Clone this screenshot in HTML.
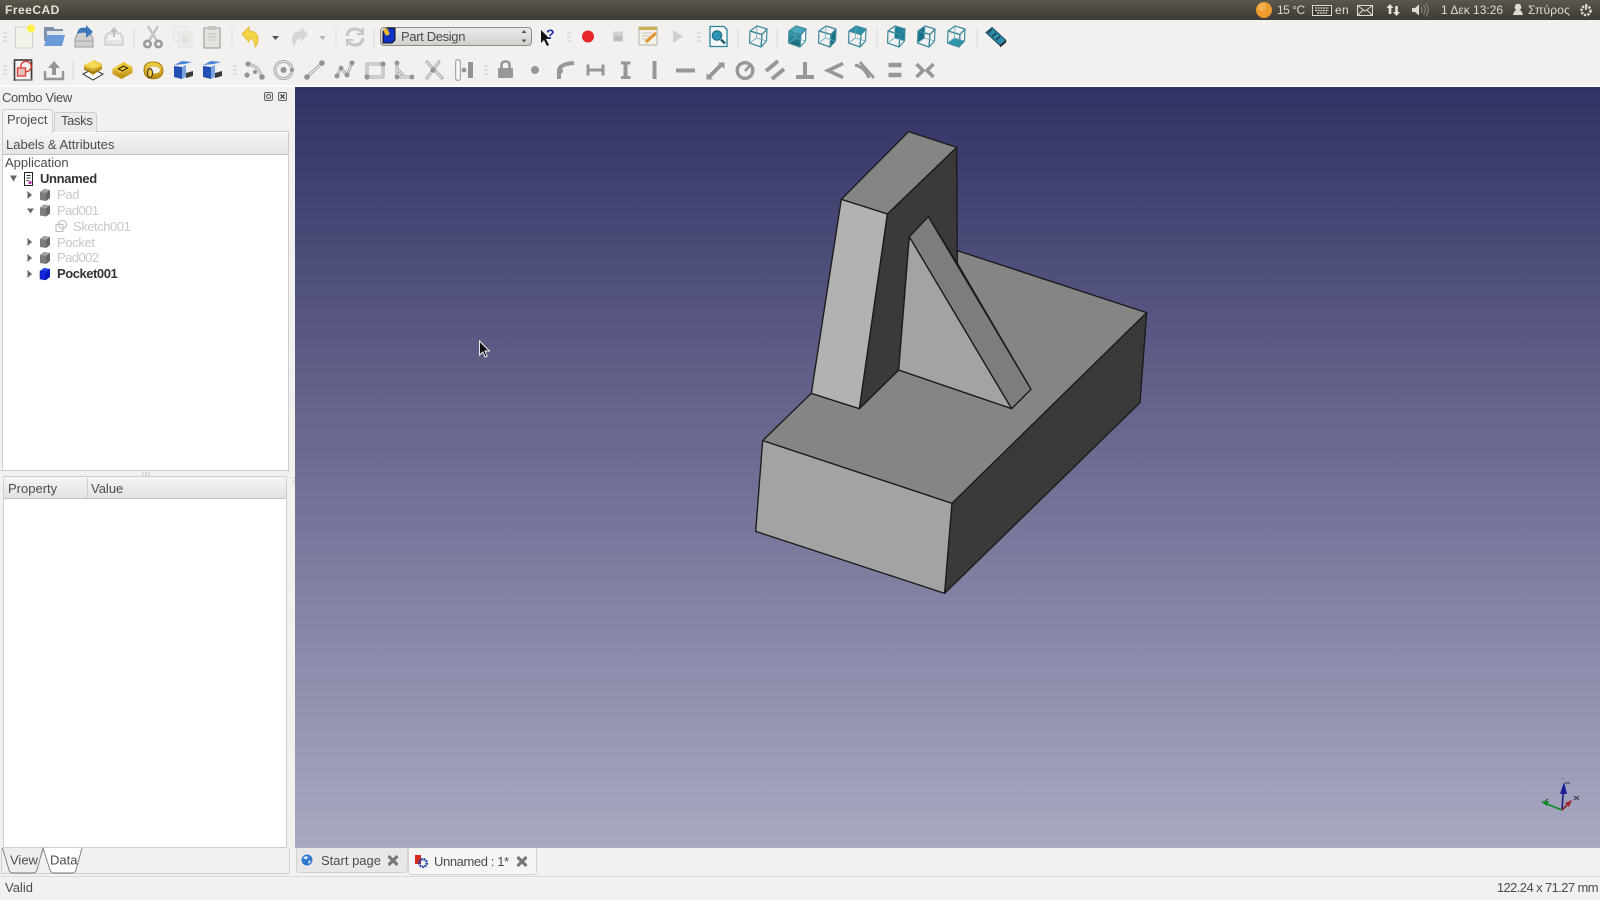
<!DOCTYPE html>
<html>
<head>
<meta charset="utf-8">
<title>FreeCAD</title>
<style>
html,body{margin:0;padding:0;width:1600px;height:900px;overflow:hidden;background:#f2f1f0}
body{position:relative;font-family:"Liberation Sans","DejaVu Sans",sans-serif;font-size:13px;color:#4c4c4c}
.t{position:absolute;white-space:nowrap;line-height:16px;height:16px}
.n{letter-spacing:-.35px}
.b{position:absolute;box-sizing:border-box}
.dis{color:#c8c7c5}
svg{position:absolute;left:0;top:0}
</style>
</head>
<body>
<!-- top bar -->
<div class="b" style="left:0;top:0;width:1600px;height:20px;background:linear-gradient(#5a574c,#3c3b36)"></div>
<div class="t" style="left:5px;top:2px;color:#e6e2d8;font-weight:bold;font-size:12px;letter-spacing:.5px">FreeCAD</div>
<div class="t" style="left:1277px;top:2px;color:#dfdbd2;font-size:12px;letter-spacing:-.5px">15 °C</div>
<div class="t" style="left:1335px;top:2px;color:#dfdbd2;font-size:12px;letter-spacing:.3px">en</div>
<div class="t" style="left:1441px;top:2px;color:#dfdbd2;font-size:12px">1 Δεκ 13:26</div>
<div class="t" style="left:1528px;top:2px;color:#dfdbd2;font-size:12px;letter-spacing:.2px">Σπύρος</div>

<!-- toolbar base line -->
<div class="b" style="left:0;top:85px;width:1600px;height:2px;background:#fbfbfa"></div>

<!-- 3D viewport -->
<div class="b" style="left:295px;top:87px;width:1305px;height:761px;background:linear-gradient(#323264,#a9a9c3)"></div>

<!-- combo box -->
<div class="b" style="left:380px;top:27px;width:152px;height:19px;border:1px solid #8f8d88;border-radius:4px;background:linear-gradient(#ecebe9,#d2d0cd)"></div>
<div class="t n" style="left:401px;top:28.500px">Part Design</div>

<!-- left dock -->
<div class="t n" style="left:2px;top:89.500px">Combo View</div>
<div class="b" style="left:2px;top:131px;width:287px;height:340px;border:1px solid #cfcdca;border-radius:2px;background:#fff"></div>
<div class="b" style="left:2px;top:109px;width:51px;height:24px;background:#f5f4f3;border:1px solid #cfcdca;border-bottom:none;border-radius:3px 3px 0 0"></div>
<div class="b" style="left:54px;top:112px;width:43px;height:20px;background:#eceae8;border:1px solid #cfcdca;border-bottom:none;border-radius:3px 3px 0 0"></div>
<div class="t" style="left:7px;top:112px">Project</div>
<div class="t n" style="left:61px;top:113px">Tasks</div>
<div class="b" style="left:3px;top:133px;width:285px;height:22px;background:linear-gradient(#f6f5f4,#e6e4e2);border-bottom:1px solid #c4c2bf"></div>
<div class="t" style="left:6px;top:137px">Labels &amp; Attributes</div>
<div class="t" style="left:5px;top:155px">Application</div>
<div class="t n" style="left:40px;top:171px;font-weight:bold;color:#333">Unnamed</div>
<div class="t dis n" style="left:57px;top:187px">Pad</div>
<div class="t dis n" style="left:57px;top:202.500px;letter-spacing:-.55px">Pad001</div>
<div class="t dis n" style="left:73px;top:218.500px;letter-spacing:-.45px">Sketch001</div>
<div class="t dis n" style="left:57px;top:234.500px">Pocket</div>
<div class="t dis n" style="left:57px;top:250px;letter-spacing:-.55px">Pad002</div>
<div class="t n" style="left:57px;top:266px;font-weight:bold;color:#333;letter-spacing:-.45px">Pocket001</div>

<div class="b" style="left:0;top:470px;width:290px;height:6px;background:#f2f1f0;border-top:1px solid #cfcdca"></div>
<div class="b" style="left:3px;top:476px;width:284px;height:372px;border:1px solid #cfcdca;background:#fff"></div>
<div class="b" style="left:4px;top:477px;width:282px;height:22px;background:linear-gradient(#f6f5f4,#e4e2e0);border-bottom:1px solid #c4c2bf"></div>
<div class="b" style="left:87px;top:478px;width:1px;height:20px;background:#cfcdca"></div>
<div class="t" style="left:8px;top:481px">Property</div>
<div class="t" style="left:91px;top:481px">Value</div>

<!-- bottom left frame -->
<div class="b" style="left:1px;top:848px;width:289px;height:26px;border:1px solid #cfcdca;border-top:none;border-radius:0 0 2px 2px"></div>

<!-- mdi tabs -->
<div class="b" style="left:296px;top:848px;width:112px;height:25px;background:#e9e8e6;border:1px solid #d4d2cf;border-top:none;border-radius:0 0 3px 3px"></div>
<div class="b" style="left:408px;top:848px;width:129px;height:27px;background:#f6f5f4;border:1px solid #d4d2cf;border-top:none;border-radius:0 0 3px 3px"></div>
<div class="t" style="left:321px;top:852.500px">Start page</div>
<div class="t" style="left:434px;top:853.500px;letter-spacing:-.4px">Unnamed : 1*</div>

<!-- status bar -->
<div class="b" style="left:0;top:876px;width:1600px;height:24px;background:#f2f1f0;border-top:1px solid #dcdad7"></div>
<div class="t" style="left:5px;top:879.500px">Valid</div>
<div class="t" style="right:2px;top:880px;letter-spacing:-.6px">122.24 x 71.27 mm</div>

<svg width="1600" height="900" viewBox="0 0 1600 900" xmlns="http://www.w3.org/2000/svg">
<defs>
  <linearGradient id="tealA" x1="0" y1="0" x2="0" y2="1"><stop offset="0" stop-color="#3a9fb5"/><stop offset="1" stop-color="#14606f"/></linearGradient>
  <linearGradient id="yel" x1="0" y1="0" x2="0" y2="1"><stop offset="0" stop-color="#f2d34a"/><stop offset="1" stop-color="#b98a10"/></linearGradient>
  <g id="cube" fill="none" stroke="#3c8a9c" stroke-width="1.200" stroke-linejoin="round">
    <path d="M-8-5.500-1-10.500 9-7.500 4-2Z"/>
    <path d="M-8-5.500 4-2 3 10.500-8.500 6.500Z"/>
    <path d="M4-2 9-7.500 8.500 4.500 3 10.500Z"/>
    <path d="M-1-10.500-1.500 1.500M-1.500 1.500-8.500 6.500M-1.500 1.500 8.500 4.500" stroke-width=".8" stroke="#6aa9b8"/>
  </g>
  <g id="x"><path d="M-3.500-3.500 3.500 3.500M3.500-3.500-3.500 3.500" stroke="#777" stroke-width="3.200" stroke-linecap="round"/></g>
  <g id="grip"><path d="M-2-4H2M-2 0H2M-2 4H2" stroke="#d3d1ce" stroke-width="1.200"/></g>
  <g id="gcube"><path d="M-5-3-1-6 5-5 5 3 1 6-5 5Z" fill="#7d7d7d"/><path d="M-1-6 5-5 1-2-5-3Z" fill="#a0a0a0"/><path d="M1-2 5-5 5 3 1 6Z" fill="#666"/></g>
</defs>

<!-- tray icons -->
<circle cx="1264" cy="10" r="8" fill="#ee9a2e"/>
<circle cx="1262" cy="7" r="4" fill="#f7be6a" opacity=".6"/>
<rect x="1312.500" y="5.500" width="19" height="10" fill="#3c3b36" stroke="#dfdbd2"/>
<path d="M1315 8h14M1315 10.500h14M1317 13h10" stroke="#dfdbd2" stroke-width="1.300" stroke-dasharray="2 .7"/>
<rect x="1357.500" y="5.500" width="15" height="10" fill="#4a4942" stroke="#dfdbd2"/>
<path d="M1358 6l7 5 7-5M1358 15l5-5M1372 15l-5-5" fill="none" stroke="#dfdbd2"/>
<path d="M1390 4l-3.500 4h2.200v6h2.600v-6h2.200zM1396.500 16l3.500-4h-2.200v-6h-2.600v6h-2.200z" fill="#e8e5dc"/>
<path d="M1412 8h3l4-3.500v11l-4-3.500h-3z" fill="#dfdbd2"/>
<path d="M1421 7q2 3 0 6M1423.500 5q3.500 5 0 10M1426 3.500q4.500 6.500 0 13" fill="none" stroke="#8d8a81" stroke-width="1"/>
<circle cx="1518" cy="7" r="3.300" fill="#dfdbd2"/><path d="M1513 15q1-4.500 3.500-5h3q2.500.5 3.500 5z" fill="#dfdbd2"/>
<circle cx="1586" cy="10.500" r="4.500" fill="none" stroke="#dfdbd2" stroke-width="2.500" stroke-dasharray="2.200 1.200"/>
<path d="M1586 4v6" stroke="#dfdbd2" stroke-width="1.800"/>

<!-- grips & separators -->
<use href="#grip" x="5" y="37"/><use href="#grip" x="5" y="70"/><use href="#grip" x="235" y="70"/><use href="#grip" x="486" y="70"/><use href="#grip" x="569" y="37"/><use href="#grip" x="699" y="37"/>
<path d="M134 28v19M232 28v19M336 28v19M374 28v19M738 28v19M777 28v19M877 28v19M977 28v19M73 60v20" stroke="#dcdad7"/>

<!-- ROW 1 -->
<g transform="translate(23.500,37)"><rect x="-8" y="-10" width="17" height="21" fill="#f3f2ea" stroke="#d2d0c9"/><circle cx="7.500" cy="-8.500" r="4" fill="#fff04a"/></g>
<g transform="translate(54,37)"><path d="M-10-10h9l2 2h8v12h-19z" fill="#7d92a8"/><path d="M-7-6H9v8h-16z" fill="#e4e6e8"/><path d="M-7-2H11L8 9H-10Z" fill="#6b9ad8"/></g>
<g transform="translate(84,37)"><path d="M-9 2-5-7H5L9 2V10H-9Z" fill="#cfcfcf" stroke="#9c9c9c"/><path d="M-9 4H9" stroke="#a8a8a8"/><path d="M-7-3Q-6-11 2-9L2-12 9-5 2 1 2-4Q-3-5-7-3Z" fill="#3e78b8"/></g>
<g transform="translate(114,37)" opacity=".6"><path d="M-9 0-6-4H6L9 0V8H-9Z" fill="#dcdcda" stroke="#a2a2a0"/><path d="M-6-2H6V3H-6Z" fill="#f5f5f3"/><path d="M0-10-4-5H-1V0H1V-5H4Z" fill="#9c9c9a"/></g>
<g transform="translate(153,37)" fill="none" stroke="#a5a5a5" stroke-width="2.600"><path d="M-5-11 4 4M5-11-4 4" stroke="#c4c4c2"/><circle cx="-5.500" cy="7" r="3.200" stroke="#9a9a9a"/><circle cx="5.500" cy="7" r="3.200" stroke="#9a9a9a"/></g>
<g transform="translate(183,37)"><rect x="-9" y="-10" width="12" height="14" fill="#f2f1ef" stroke="#e2e1de"/><rect x="-4" y="-5" width="13" height="15" fill="#eeedeb" stroke="#e2e1de"/><rect x="-1" y="-2" width="7" height="8" fill="#e2e1de"/></g>
<g transform="translate(212,37)"><rect x="-8" y="-9" width="16" height="20" fill="#e4e3e0" stroke="#b0afac" stroke-width="1.500"/><rect x="-4" y="-11" width="8" height="4" fill="#c6c5c2"/><path d="M-4-3h8M-4 0h8M-4 3h6" stroke="#bdbcb9"/></g>
<g transform="translate(251,37)"><path d="M-9-3-2-10V-6Q7-6 7 3 7 7 4 10 4 2-2 1V5Z" fill="#f5d445" stroke="#e2bd35"/></g>
<path d="M272 36h7l-3.500 4z" fill="#555"/>
<g transform="translate(299,37)"><path d="M9-3 2-10V-6Q-7-6-7 3-7 7-4 10-4 2 2 1V5Z" fill="#d6d6d4"/></g>
<path d="M319 36h7l-3.500 4z" fill="#b8b8b6"/>
<g transform="translate(355,37)" fill="none" stroke="#c6c6c4" stroke-width="3"><path d="M-8-1Q-7-8 0-8 4-8 7-5"/><path d="M8 1Q7 8 0 8-4 8-7 5"/><path d="M8-9V-3H2M-8 9V3H-2" stroke-width="2"/></g>
<!-- combo icon and arrows -->
<g transform="translate(389,36)"><path d="M-6-5-2-8H6V4L3 7H-6Z" fill="#0f31c8" stroke="#111"/><path d="M-6-6-2-8 1-2-3 0Z" fill="#e7b928"/></g>
<path d="M521.500 33l2.500-3 2.500 3zM521.500 39.500l2.500 3 2.500-3z" fill="#555"/>
<!-- what's this -->
<g transform="translate(547,37)"><path d="M-6-7V6L-3 3 0 9 2 8-1 2H3Z" fill="#111"/><text x="-1" y="2" font-family="Liberation Sans,sans-serif" font-size="14" font-weight="bold" fill="#1c2fa5">?</text></g>
<circle cx="588" cy="36.500" r="6" fill="#e8262c"/>
<rect x="613" y="31.500" width="10" height="10" fill="#d2d1cf"/><rect x="614" y="36" width="8" height="5" fill="#bcbbb9"/>
<g transform="translate(648,36)"><rect x="-9" y="-9" width="18" height="18" rx="1" fill="#f2f1ea" stroke="#b5b4ac"/><rect x="-9" y="-9" width="18" height="3" fill="#c9b04a"/><path d="M-6-3H4M-6 0H2M-6 3H0" stroke="#c6c5be"/><path d="M-2 6 8-3" stroke="#e2902a" stroke-width="3"/></g>
<path d="M673 30v13l10-6.500z" fill="#d0cfcd"/>
<g transform="translate(718,36.500)"><path d="M-8-10H6L9-7V10H-8Z" fill="#f8f8f6" stroke="#2a8398" stroke-width="1.300"/><circle cx="-1" cy="-1" r="4.800" fill="#2d94b4" stroke="#1a6a80"/><path d="M3 3 7 7" stroke="#1a5a70" stroke-width="2.400"/></g>
<use href="#cube" x="758" y="36.500"/>
<g transform="translate(797,36.500)"><path d="M-8-5.500-1-10.500 9-7.500 4-2Z" fill="#48a9bf"/><path d="M-8-5.500 4-2 3 10.500-8.500 6.500Z" fill="url(#tealA)"/><path d="M4-2 9-7.500 8.500 4.500 3 10.500Z" fill="#fff"/><use href="#cube"/></g>
<g transform="translate(827,36.500)"><path d="M4-2 9-7.500 8.500 4.500 3 10.500Z" fill="#1a7287"/><use href="#cube"/></g>
<g transform="translate(857,36.500)"><path d="M-8-5.500-1-10.500 9-7.500 4-2Z" fill="#2e8fa8"/><use href="#cube"/></g>
<g transform="translate(896,36.500)"><path d="M-1-10.500 9-7.500 8.500 4.500-1.500 1.500Z" fill="#1f7f96"/><use href="#cube"/></g>
<g transform="translate(926,36.500)"><path d="M-8-5.500-1-10.500-1.500 1.500-8.500 6.500Z" fill="#17708a"/><use href="#cube"/></g>
<g transform="translate(956,36.500)"><path d="M-8.500 6.500-1.500 1.500 8.500 4.500 3 10.500Z" fill="#2e97b0"/><use href="#cube"/></g>
<g transform="translate(996,36.500)"><path d="M-10-4-4-9 10 4 4 9Z" fill="#2e8aa6" stroke="#15485a"/><path d="M-8-3.500-4-7M-4 0 0-3.500M0 3.500 4 0" stroke="#123" stroke-width="1"/><path d="M4 9 10 4 10 6 4 11Z" fill="#222"/></g>

<!-- ROW 2 -->
<g transform="translate(23.500,70)"><rect x="-9" y="-10" width="17" height="20" fill="#f4f3f1" stroke="#3c3c3c" stroke-width="1.600"/><path d="M-8 10H9V-9" stroke="#aaa" fill="none"/><circle cx="2.500" cy="-3.500" r="5.200" fill="none" stroke="#e03a32" stroke-width="1.300"/><rect x="-6" y="-2" width="8" height="8" fill="#eac2bc" stroke="#e03a32" stroke-width="1.300"/></g>
<g transform="translate(54,70)"><path d="M-9 1V9H9V1" fill="none" stroke="#959595" stroke-width="2.400"/><path d="M0-9-6-2H-2V5H2V-2H6Z" fill="#959595"/></g>
<g transform="translate(93,70)"><path d="M-10 4 0-1 10 4 0 10Z" fill="#fff" stroke="#333"/><path d="M-9-1V-5L1-10 9-6V-1L0 5Z" fill="url(#yel)"/><path d="M-9-5-1-9 9-5 0-1Z" fill="#f5da57"/><path d="M-9-1 0 3 9-2" fill="none" stroke="#8a6a10"/></g>
<g transform="translate(122.500,70)"><path d="M-10-1 1-8 10-3V3L-1 9-10 4Z" fill="url(#yel)"/><path d="M-10-1 1-8 10-3-1 3Z" fill="#ecc435"/><path d="M-4-1 1-4 5-2 0 1Z" fill="none" stroke="#3a2c05" stroke-width="1.200"/></g>
<g transform="translate(153,70)"><path d="M-9 0Q-9-8 0-8 9-8 10 0 10 6 5 8 -2 10-6 7-9 5-9 0Z" fill="url(#yel)" stroke="#a67c0c"/><ellipse cx="1" cy="0" rx="6" ry="3.500" fill="#f3f1ee"/><ellipse cx="-3" cy="3" rx="2.500" ry="4.500" fill="#f0c83d" stroke="#222"/></g>
<g transform="translate(183,70)"><path d="M-9-5-1-9 9-8 2-6Z" fill="#4a86d8"/><path d="M-9-4-1-3V9L-9 7Z" fill="#2350b5"/><path d="M-1-3 3-5V7L-1 9Z" fill="#7aa3e0"/><path d="M3 3 10 1V6L3 8Z" fill="#3a3a3a"/></g>
<g transform="translate(212,70)"><path d="M-9-5-1-9 9-8 2-6Z" fill="#4a86d8"/><path d="M-9-4-1-3V9L-9 7Z" fill="#2350b5"/><path d="M-1-3 3-5V7L-1 9Z" fill="#7aa3e0"/><path d="M3 3 10 1V6L3 8Z" fill="#3a3a3a"/></g>
<!-- sketch tools: double-line geometry -->
<g fill="none" stroke="#a6a6a4" stroke-width="3" stroke-linecap="round" stroke-linejoin="round">
  <path id="s1" d="M247 64Q258 65 262 77"/>
  <circle cx="283.500" cy="70" r="8.500"/>
  <path d="M307 77 322 63"/>
  <path d="M337 76 341 68 347 75 352 63"/>
  <rect x="367" y="64" width="16" height="13"/>
  <path d="M397 63V77H412M397 69 405 77"/>
  <path d="M427 62 442 78M439 62 427 78"/>
  <path d="M458 62V78" stroke-width="6" stroke="#a6a6a4"/>
</g>
<g fill="none" stroke="#e6e6e4" stroke-width="1.200" stroke-linecap="round" stroke-linejoin="round">
  <path d="M247 64Q258 65 262 77"/>
  <circle cx="283.500" cy="70" r="8.500"/>
  <path d="M307 77 322 63"/>
  <path d="M337 76 341 68 347 75 352 63"/>
  <rect x="367" y="64" width="16" height="13"/>
  <path d="M397 63V77H412M397 69 405 77"/>
  <path d="M427 62 442 78M439 62 427 78"/>
  <path d="M458 62V78" stroke-width="3.600" stroke="#f6f6f4"/>
</g>
<g fill="#939393">
  <circle cx="248" cy="64" r="2.600"/><circle cx="247" cy="75" r="2.600"/><circle cx="262" cy="77" r="2.800"/><circle cx="255" cy="72" r="2"/>
  <circle cx="283.500" cy="70" r="3"/><circle cx="292" cy="70" r="2"/>
  <circle cx="307" cy="77" r="2.800"/><circle cx="322" cy="63" r="2.800"/>
  <circle cx="337" cy="76" r="2.500"/><circle cx="341" cy="68" r="2.300"/><circle cx="347" cy="75" r="2.500"/><circle cx="352" cy="63" r="2.500"/>
  <circle cx="383" cy="64" r="2.600"/><circle cx="367" cy="77" r="2.600"/>
  <circle cx="397" cy="63" r="2.400"/><circle cx="397" cy="77" r="2.400"/><circle cx="412" cy="77" r="2.400"/>
  <circle cx="433" cy="70" r="2.600"/>
  <rect x="468" y="62" width="5" height="16"/><circle cx="464" cy="70" r="2.400"/>
</g>
<g transform="translate(505.500,70)"><path d="M-4-2V-5Q-4-8.500 0-8.500 4-8.500 4-5V-2" fill="none" stroke="#979797" stroke-width="2.600"/><rect x="-7.500" y="-2" width="15" height="10" rx="1" fill="#979797"/></g>
<circle cx="535" cy="70" r="4" fill="#979797"/>
<g fill="none" stroke="#979797" stroke-width="4" stroke-linecap="butt" stroke-linejoin="miter">
  <path d="M559 79V71Q559 64 574 63"/>
  <path d="M588 64.500V75.500M603 64.500V75.500" stroke-width="3"/><path d="M588 70H603" stroke-width="3"/>
  <path d="M625.500 63V78"/><path d="M621 63H630.500M621 77.500H630.500" stroke-width="3"/>
  <path d="M654.500 61V79"/>
  <path d="M676 70.500H695"/>
  <path d="M709 77 721 65"/>
  <circle cx="745" cy="70.500" r="7.800" stroke-width="3.400"/><path d="M745 71 749.500 66" stroke-width="2.600"/>
  <path d="M766 71 778 61M772 79 784 69"/>
  <path d="M805 62V76"/><path d="M796 77H814"/>
  <path d="M843 63.500 828 70.500 843 77.500" stroke-width="3.600"/>
  <path d="M855 65Q865 67 869 78" stroke-width="3.200"/><path d="M860 62 874 78" stroke-width="2.800"/>
  <path d="M888.500 65H901.500M888.500 75H901.500" stroke-width="4.500"/>
  <path d="M916.500 64 923 70.500 916.500 77M933.500 64 927 70.500 933.500 77" stroke-width="3.600"/>
</g>
<path d="M706.500 73v6.500h6.500zM724.500 62.500h-6.500l6.500 6.500z" fill="#979797"/>
<path d="M560 68a3 3 0 1 0 .1 0" fill="#979797"/>

<!-- dock float/close buttons -->
<rect x="264.500" y="92.500" width="8" height="8" rx="1.500" fill="#e8e7e5" stroke="#666"/><circle cx="268.500" cy="96.500" r="2" fill="none" stroke="#555"/>
<rect x="278.500" y="92.500" width="8" height="8" rx="1.500" fill="#e8e7e5" stroke="#666"/><path d="M280.500 94.500l4 4m0-4l-4 4" stroke="#333" stroke-width="1.200"/>

<!-- tree icons -->
<path d="M10 175.500h7l-3.500 6z" fill="#666"/>
<path d="M27.500 191l4.500 4-4.500 4zM27.500 238l4.500 4-4.500 4zM27.500 254l4.500 4-4.500 4zM27.500 270l4.500 4-4.500 4z" fill="#666"/>
<path d="M27 208.500h7l-3.500 5z" fill="#666"/>
<g transform="translate(28.500,179)"><rect x="-4" y="-6.500" width="8" height="13" fill="#fff" stroke="#222"/><path d="M-2-3.500h4M-2-1h4M-2 1.500h2" stroke="#333"/><rect x="0" y="2" width="3" height="3" fill="#c23bb4"/></g>
<use href="#gcube" x="45" y="195"/><use href="#gcube" x="45" y="210.500"/><use href="#gcube" x="45" y="242"/><use href="#gcube" x="45" y="258"/>
<g transform="translate(45,274)"><path d="M-5-3-1-6 5-5 5 3 1 6-5 5Z" fill="#0d18c6"/><path d="M-1-6 5-5 1-2-5-3Z" fill="#1f3fe8"/><path d="M-5-3 1-2 1 6-5 5Z" fill="#1226e0" stroke="#061080" stroke-width=".5"/></g>
<g transform="translate(61,226.500)" fill="none" stroke="#bcbcba" stroke-width="1.100"><rect x="-5" y="-2" width="7" height="7"/><circle cx="1.500" cy="-2" r="4"/></g>

<!-- splitter grips -->
<path d="M143 472v4M146 472v4M149 472v4" stroke="#c4c2bf"/>
<path d="M292 478h3M292 481h3M292 484h3" stroke="#cfcdca"/>

<!-- bottom tabs View / Data -->
<path d="M2.500 848 9 870Q10 873 13 873H33Q36 873 37 870L43 848" fill="#efeeec" stroke="#777" stroke-width=".9"/>
<path d="M43 848 50 870Q51 873 54 873H72Q75 873 76 870L82 848" fill="#fff" stroke="#777" stroke-width=".9"/>
<text x="10" y="864.500" font-family="Liberation Sans,sans-serif" font-size="13" fill="#4c4c4c">View</text>
<text x="50" y="864.500" font-family="Liberation Sans,sans-serif" font-size="13" fill="#4c4c4c">Data</text>

<!-- mdi tab icons -->
<circle cx="307" cy="860" r="5.500" fill="#2f78d0"/><path d="M303 858q3-3 5-1-1 3-3 2zM309 860l2 2-3 2z" fill="#e6eef8"/>
<use href="#x" x="393" y="860.500"/>
<g transform="translate(421,861)"><path d="M-6-6H0V3H-6Z" fill="#d9281e"/><circle cx="2" cy="2" r="3.800" fill="none" stroke="#1c40a8" stroke-width="2.400" stroke-dasharray="1.800 .8"/></g>
<use href="#x" x="522" y="861.500"/>

<!-- model -->
<g transform="translate(740,120) scale(.33333)" stroke="#1a1a1a" stroke-width="4" stroke-linejoin="round">
  <polygon fill="#858585" points="68,962 214,820 358,866 476,750 815,866 873,808 652,430 652,392 1220,578 636,1150"/>
  <polygon fill="#a3a3a3" points="68,962 636,1150 614,1420 47,1234"/>
  <polygon fill="#3a3a3a" points="636,1150 1220,578 1200,848 614,1420"/>
  <polygon fill="#3a3a3a" points="442,282 650,82 652,430 565,290 508,350 476,750 358,866"/>
  <polygon fill="#858585" points="304,238 506,35 650,82 442,282"/>
  <polygon fill="#b2b2b2" points="304,238 442,282 358,866 214,820"/>
  <polygon fill="#a3a3a3" points="508,350 815,866 476,750"/>
  <polygon fill="#7d7d7d" points="508,350 565,290 873,808 815,866"/>
</g>

<!-- cursor -->
<path d="M479.500 341v14l3.300-3 2.400 5 2-1-2.300-5h4.500z" fill="#111" stroke="#fff" stroke-width=".9"/>

<!-- axis -->
<g stroke-width="1.600" fill="none">
  <path d="M1562 810 1563.500 788" stroke="#1d1d8a"/>
  <path d="M1562 810 1543 802.500" stroke="#0d8a25"/>
  <path d="M1562 810 1570 802" stroke="#8a2020"/>
</g>
<path d="M1560 794 1564 782 1567 794Z" fill="#1d1d9a"/>
<path d="M1541 801.500 1549 801 1547 806Z" fill="#0d8a25"/>
<path d="M1572 800 1565 803 1569 807Z" fill="#a02828"/>
<path d="M1565 783h5M1562.500 778.500h1M1545 801l3-2M1574 796l5 4m0-4l-5 4" stroke="#333" stroke-width="1"/>
</svg>
</body>
</html>
